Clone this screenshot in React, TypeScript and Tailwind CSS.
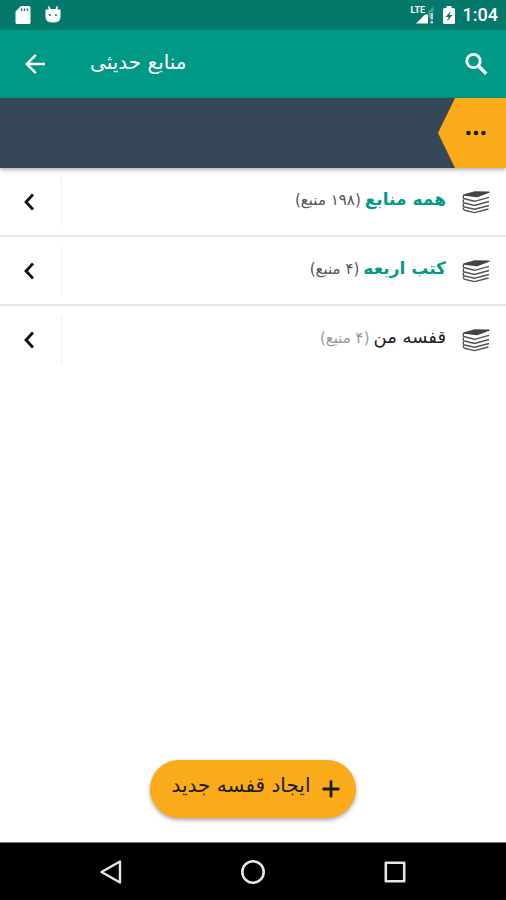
import { MdArrowBack } from "react-icons/md";

const shelves = [
  { title: "همه منابع", count: "(۱۹۸ منبع)", titleClass: "text-[17px] font-bold text-[#059a85]", countClass: "text-[#555555]" },
  { title: "کتب اربعه", count: "(۴ منبع)", titleClass: "text-[17px] font-bold text-[#059a85]", countClass: "text-[#555555]" },
  { title: "قفسه من", count: "(۴ منبع)", titleClass: "text-[18px] text-[#222222]", countClass: "text-[#999999]" },
];

function BooksIcon() {
  return (
    <svg viewBox="0 0 28 24" className="h-6 w-7 shrink-0" fill="none" stroke="#555555" strokeWidth="1.4" strokeLinejoin="round">
      <path d="M2 5 13 2 27 2.200 15 6.500Z" fill="#444444" stroke="#444444" />
      <path d="M2 5Q.8 6.500 1.600 8.500L12.500 11.300 27 7.300" />
      <path d="M1.600 9.500Q.8 11 1.600 12.800L12.500 15.500 27 11.500" />
      <path d="M1.600 13.500Q.8 15 1.600 16.800L12.500 19.300 27 15.500" />
      <path d="M1.600 17.500Q.8 19 2.600 20.300L12.500 22.600 26.500 19" />
    </svg>
  );
}

function ChevronIcon() {
  return (
    <svg viewBox="0 0 12 18" className="h-[18px] w-3" fill="none" stroke="#111111" strokeWidth="2.8">
      <path d="M10 1.500 3 9l7 7.500" />
    </svg>
  );
}

function SearchIcon() {
  return (
    <svg viewBox="0 0 24 24" className="size-6" fill="none" stroke="currentColor" strokeWidth="2.8">
      <circle cx="9.500" cy="9" r="6.700" />
      <path d="m14.200 13.700 8 8" strokeWidth="3.4" />
    </svg>
  );
}

function PlusIcon() {
  return (
    <svg viewBox="0 0 18 18" className="size-[18px]" fill="none" stroke="currentColor" strokeWidth="2.8" strokeLinecap="round">
      <path d="M9 1.700v14.600M1.700 9h14.600" />
    </svg>
  );
}

function StatusBar() {
  return (
    <div className="flex h-[30px] items-center justify-between bg-[#04786a] pr-2 pl-[15px] text-white">
      <div className="flex items-center gap-3.5">
        <svg viewBox="0 0 16 20" className="h-5 w-4" fill="currentColor">
          <path fillRule="evenodd" d="M6 1h8q1.500 0 1.500 1.500v15q0 1.500-1.500 1.500H2Q.5 19 .5 17.500V6.500ZM6 3.500v2.500h1.300v-2.500ZM8.800 3.500v2.500h1.300v-2.500ZM11.600 3.500v2.500h1.300v-2.500Z" />
        </svg>
        <svg viewBox="0 0 16 20" className="h-5 w-4" fill="currentColor">
          <path d="M3 1.500 4.300 1 5.500 4h5L11.700 1l1.300.5-.7 3H15.500V12q0 5.500-7.500 5.500T.5 12V4.500h3.200Z" />
          <circle cx="5" cy="10" r="1" fill="#04786a" />
          <circle cx="11" cy="10" r="1" fill="#04786a" />
        </svg>
      </div>
      <div className="flex items-center gap-2">
        <div className="relative h-5 w-6">
          <span className="absolute top-0 left-0 font-[Roboto,sans-serif] text-[9px] leading-[10px] font-bold">LTE</span>
          <svg viewBox="0 0 24 20" className="h-5 w-6">
            <path d="M17.500 6.500 22.500 1.500V7H19v6h-1.500Z" fill="#ffffff" opacity=".3" />
            <path d="M5 18.500 14 9.500h3v9Z" fill="#ffffff" />
            <path d="M19.500 8h2.500v6.500h-2.500ZM19.500 16h2.500v2.500h-2.500Z" fill="#ffffff" opacity=".7" />
          </svg>
        </div>
        <svg viewBox="0 0 12 20" className="h-5 w-3" fill="currentColor">
          <path fillRule="evenodd" d="M3.500 1h5v2h2q1.500 0 1.500 1.500v13q0 1.500-1.500 1.500h-9Q0 19 0 17.500v-13Q0 3 1.500 3h2ZM8 6 2.500 12H5.500L4 16.500 9.500 10H6.500Z" />
        </svg>
        <span className="font-[Roboto,sans-serif] text-[18px] leading-5 font-medium">1:04</span>
      </div>
    </div>
  );
}

export default function App() {
  return (
    <div className="flex min-h-screen flex-col bg-white font-['DejaVu_Sans',sans-serif]">
      <StatusBar />

      <header className="flex h-[68px] items-center bg-[#009985] text-white">
        <button type="button" aria-label="بازگشت" className="flex h-full w-[70px] items-center justify-center">
          <MdArrowBack className="size-[30px]" />
        </button>
        <h1 dir="rtl" className="pb-1 pl-5 text-[20px] leading-7">منابع حدیثی</h1>
        <button type="button" aria-label="جستجو" className="ml-auto flex h-full w-[60px] items-center justify-center">
          <SearchIcon />
        </button>
      </header>

      <nav className="flex h-[70px] justify-end bg-[#364858] shadow-[0_2px_4px_rgba(0,0,0,0.3)]">
        <button
          type="button"
          aria-label="بیشتر"
          className="flex w-[68px] items-center justify-center bg-[#faab1a] pl-2 [clip-path:polygon(25%_0,100%_0,100%_100%,25%_100%,0_50%)]"
        >
          <svg viewBox="0 0 20 6" className="h-1.5 w-5" fill="#1c1c1c">
            <circle cx="2.500" cy="3" r="2.300" />
            <circle cx="10" cy="3" r="2.300" />
            <circle cx="17.500" cy="3" r="2.300" />
          </svg>
        </button>
      </nav>

      <main className="flex flex-1 flex-col">
        <ul dir="rtl" className="divide-y-2 divide-[#e6e6e6]">
          {shelves.map((shelf) => (
            <li key={shelf.title}>
              <div className="flex h-[67px] items-center pr-4">
                <a href="#" className="flex flex-1 items-center gap-4">
                  <BooksIcon />
                  <span className="flex items-baseline gap-1 pb-1">
                    <span className={`leading-7 ${shelf.titleClass}`}>{shelf.title}</span>
                    <span className={`text-[15px] leading-7 ${shelf.countClass}`}>{shelf.count}</span>
                  </span>
                </a>
                <button
                  type="button"
                  aria-label={shelf.title}
                  className="flex h-12 w-[62px] items-center justify-center border-r border-[#eeeeee] pr-1"
                >
                  <ChevronIcon />
                </button>
              </div>
            </li>
          ))}
        </ul>

        <div className="mt-auto flex justify-center pb-6">
          <button
            type="button"
            dir="rtl"
            className="flex h-[58px] items-center gap-3 rounded-full bg-[#faab1a] pr-4 pl-[22px] text-[20px] text-[#1c1c1c] shadow-[0_2px_4px_rgba(0,0,0,0.35)]"
          >
            <PlusIcon />
            <span className="pb-2 leading-7">ایجاد قفسه جدید</span>
          </button>
        </div>
      </main>

      <footer className="flex h-[58px] items-center justify-around border-t border-[#777777] bg-black px-10">
        <button type="button" aria-label="Back" className="flex w-12 justify-center">
          <svg viewBox="0 0 24 26" className="h-[26px] w-6" fill="none" stroke="#e6e6e6" strokeWidth="2.400" strokeLinejoin="round">
            <path d="M21 2.500v21L2.500 13Z" />
          </svg>
        </button>
        <button type="button" aria-label="Home" className="flex w-12 justify-center">
          <svg viewBox="0 0 26 26" className="size-[26px]" fill="none" stroke="#e6e6e6" strokeWidth="2.600">
            <circle cx="13" cy="13" r="10.700" />
          </svg>
        </button>
        <button type="button" aria-label="Recents" className="flex w-12 justify-center">
          <svg viewBox="0 0 24 24" className="size-6" fill="none" stroke="#e6e6e6" strokeWidth="2.600" strokeLinejoin="round">
            <path d="M2.800 2.800h18.400v18.400H2.800Z" />
          </svg>
        </button>
      </footer>
    </div>
  );
}
